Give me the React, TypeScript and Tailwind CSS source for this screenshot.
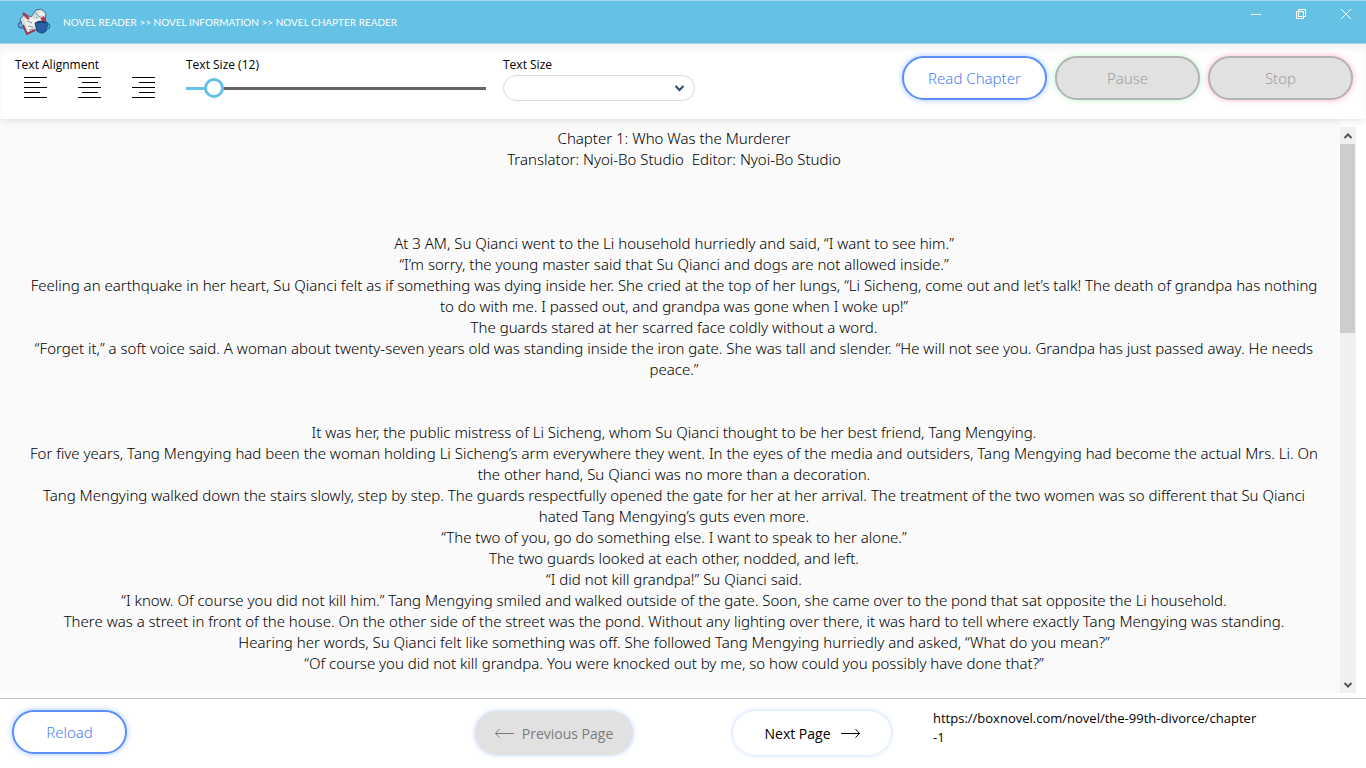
import { useState } from "react";

const story: string[] = [
  "Chapter 1: Who Was the Murderer",
  "Translator: Nyoi-Bo Studio\u00a0 Editor: Nyoi-Bo Studio",
  "",
  "",
  "",
  "At 3 AM, Su Qianci went to the Li household hurriedly and said, “I want to see him.”",
  "“I’m sorry, the young master said that Su Qianci and dogs are not allowed inside.”",
  "Feeling an earthquake in her heart, Su Qianci felt as if something was dying inside her. She cried at the top of her lungs, “Li Sicheng, come out and let’s talk! The death of grandpa has nothing to do with me. I passed out, and grandpa was gone when I woke up!”",
  "The guards stared at her scarred face coldly without a word.",
  "“Forget it,” a soft voice said. A woman about twenty-seven years old was standing inside the iron gate. She was tall and slender. “He will not see you. Grandpa has just passed away. He needs peace.”",
  "",
  "",
  "It was her, the public mistress of Li Sicheng, whom Su Qianci thought to be her best friend, Tang Mengying.",
  "For five years, Tang Mengying had been the woman holding Li Sicheng’s arm everywhere they went. In the eyes of the media and outsiders, Tang Mengying had become the actual Mrs. Li. On the other hand, Su Qianci was no more than a decoration.",
  "Tang Mengying walked down the stairs slowly, step by step. The guards respectfully opened the gate for her at her arrival. The treatment of the two women was so different that Su Qianci hated Tang Mengying’s guts even more.",
  "“The two of you, go do something else. I want to speak to her alone.”",
  "The two guards looked at each other, nodded, and left.",
  "“I did not kill grandpa!” Su Qianci said.",
  "“I know. Of course you did not kill him.” Tang Mengying smiled and walked outside of the gate. Soon, she came over to the pond that sat opposite the Li household.",
  "There was a street in front of the house. On the other side of the street was the pond. Without any lighting over there, it was hard to tell where exactly Tang Mengying was standing.",
  "Hearing her words, Su Qianci felt like something was off. She followed Tang Mengying hurriedly and asked, “What do you mean?”",
  "“Of course you did not kill grandpa. You were knocked out by me, so how could you possibly have done that?”",
];

function Logo() {
  return (
    <svg width="34" height="30" viewBox="0 0 34 30" aria-hidden="true">
      <path d="m3 12 5-5 6 3 5-7 5-1 5 4-1 9-6 6-12 6-5-9z" fill="#d4dcdb" stroke="#4a6a90" strokeWidth="1" />
      <path d="m7 12 6-2 6 2 4-8 5 3-3 9-8 4-6 5z" fill="#eef0ea" />
      <path d="m6 6 6 6" stroke="#a93a50" strokeWidth="2.5" />
      <path d="m25 10 3 5" stroke="#b5394b" strokeWidth="4" />
      <path d="m6 18 4 9 8-4" stroke="#9b3c55" strokeWidth="2" fill="none" />
      <path d="M18 16q6-4 13 0l-2 8q-4 4-9 0z" fill="#2762a5" stroke="#243f78" />
      <path d="M20 16q5-2 9 0" stroke="#17335f" fill="none" />
      <path d="M30 17q4 0 2 4l-3 2M5 15q-5 1-3 5l4 1" fill="none" stroke="#326faf" strokeWidth="1.5" />
      <path d="m10 14 5 2m-4 3 5 1m-4 3 4-1M18 6l4 3m-3 2 5-2" stroke="#8396a8" />
    </svg>
  );
}

function TitleBar() {
  return (
    <header className="flex h-11 items-center border-y border-[#a9dcf0] bg-[#65c2e5] pl-[17px] text-white">
      <Logo />
      <h1 className="ml-3 grow whitespace-nowrap font-['Lato',sans-serif] text-[10px] leading-5">
        NOVEL READER &gt;&gt; NOVEL INFORMATION &gt;&gt; NOVEL CHAPTER READER
      </h1>
      <div className="flex gap-[5px] self-start">
        <button aria-label="Minimize" className="flex h-[26px] w-10 items-center justify-center">
          <svg width="12" height="12" fill="none" stroke="currentColor" shapeRendering="crispEdges"><path d="M1 6.5h10" /></svg>
        </button>
        <button aria-label="Restore" className="flex h-[26px] w-10 items-center justify-center">
          <svg width="12" height="12" fill="none" stroke="currentColor" shapeRendering="crispEdges"><path d="M3.5 1.5h7v7h-7zM1.5 3.5h7v7h-7z" /></svg>
        </button>
        <button aria-label="Close" className="flex h-[26px] w-10 items-center justify-center">
          <svg width="12" height="12" fill="none" stroke="currentColor"><path d="m1 1 10 10M11 1 1 11" /></svg>
        </button>
      </div>
    </header>
  );
}

function AlignButton({ label, d }: { label: string; d: string }) {
  return (
    <button aria-label={label} className="flex h-[23px] w-[54px] items-end pl-[9px]">
      <svg width="23" height="21" viewBox="0 0 23 21" fill="none" stroke="#000" shapeRendering="crispEdges"><path d={d} /></svg>
    </button>
  );
}

function Toolbar() {
  const [size, setSize] = useState(12);
  return (
    <section className="relative z-10 flex h-[75px] shrink-0 items-start bg-white pt-[11px] shadow-[0_1px_8px_rgba(0,0,0,0.12),inset_0_5px_6px_rgba(0,0,0,0.05)]">
      <div className="ml-[15px] w-[171px]">
        <div className="h-5 text-[12px] leading-5">Text Alignment</div>
        <div className="flex">
          <AlignButton label="Align left" d="M0 .5h23M0 5.5h16M0 10.5h23M0 15.5h16M0 20.5h23" />
          <AlignButton label="Align center" d="M0 .5h23M4 5.5h16M0 10.5h23M4 15.5h16M0 20.5h23" />
          <AlignButton label="Align right" d="M0 .5h23M7 5.5h16M0 10.5h23M7 15.5h16M0 20.5h23" />
        </div>
      </div>
      <div className="w-[317px]">
        <label htmlFor="size" className="block h-5 text-[12px] leading-5">Text Size ({size})</label>
        <input
          id="size"
          type="range"
          min="8"
          max="72"
          value={size}
          onChange={(e) => setSize(Number(e.target.value))}
          className="block h-[26px] w-[300px] appearance-none bg-[linear-gradient(to_right,#65c2e5_20px,#666_20px)] bg-[length:100%_3px] bg-center bg-no-repeat [&::-webkit-slider-thumb]:size-5 [&::-webkit-slider-thumb]:appearance-none [&::-webkit-slider-thumb]:rounded-full [&::-webkit-slider-thumb]:border-[3px] [&::-webkit-slider-thumb]:border-[#65c2e5] [&::-webkit-slider-thumb]:bg-white"
        />
      </div>
      <div>
        <label htmlFor="preset" className="block h-5 text-[12px] leading-5">Text Size</label>
        <div className="grid">
          <select id="preset" className="col-start-1 row-start-1 h-[26px] w-48 appearance-none rounded-full border border-[#d9d9e0] bg-white px-3 text-[12px]">
            <option></option>
            <option>12</option>
            <option>14</option>
          </select>
          <svg className="pointer-events-none col-start-1 row-start-1 mr-2.5 self-center justify-self-end" width="11" height="8" fill="none" stroke="#344767" strokeWidth="2"><path d="m1.500 2 4 4 4-4" /></svg>
        </div>
      </div>
      <div className="mt-px mr-[13px] ml-auto flex gap-2 font-['Noto_Sans',sans-serif] text-[15px] font-light">
        <button className="h-11 w-[145px] rounded-full border-2 border-[#5a8dff] bg-white text-[#4a80f5] shadow-[0_0_6px_#a9c8ff]">Read Chapter</button>
        <button disabled className="h-11 w-[145px] rounded-full border-2 border-[#b3b3b3] bg-[#e1e1e1] text-[#a0a0a0] shadow-[0_0_6px_#b9f5cb]">Pause</button>
        <button disabled className="h-11 w-[145px] rounded-full border-2 border-[#b3b3b3] bg-[#e1e1e1] text-[#a0a0a0] shadow-[0_0_6px_#ffb3c4]">Stop</button>
      </div>
    </section>
  );
}

function ScrollBar() {
  return (
    <div className="flex w-[26px] shrink-0 bg-white pt-2 pr-2.5" aria-hidden="true">
      <div className="flex w-4 flex-col bg-[#f0f0f0]">
        <svg className="shrink-0" width="16" height="17" fill="none" stroke="#555" strokeWidth="2"><path d="m4.500 11 3.500-3.500 3.500 3.500" /></svg>
        <div className="h-[189px] w-[15px] bg-[#cdcdcd]" />
        <svg className="mt-auto shrink-0" width="16" height="17" fill="none" stroke="#555" strokeWidth="2"><path d="m4.500 7 3.500 3.500 3.500-3.500" /></svg>
      </div>
    </div>
  );
}

function Reader() {
  return (
    <main className="flex min-h-0 grow bg-[#fafafa]">
      <article className="min-w-0 grow overflow-hidden pt-[9px] pr-4 pl-6 text-center font-['Noto_Sans',sans-serif] text-[15px] leading-[21px] font-light">
        {story.map((line, i) => (
          <p key={i} className="min-h-[21px]">{line}</p>
        ))}
      </article>
      <ScrollBar />
    </main>
  );
}

function Footer() {
  return (
    <footer className="mt-[5px] flex h-[70px] shrink-0 items-start border-t border-[#bfc3ca] bg-white pt-[11px]">
      <button className="ml-3 h-11 w-[115px] rounded-full border-2 border-[#5a8dff] bg-white font-['Noto_Sans',sans-serif] text-[15px] font-light text-[#4a80f5] shadow-[0_0_6px_#a9c8ff]">Reload</button>
      <button disabled className="mt-px ml-[348px] flex h-11 w-[158px] items-center justify-center gap-2 rounded-full bg-[#e1e1e1] text-[14px] text-[#7b7b7b] shadow-[0_0_5px_#bcd5ff]">
        <svg width="19" height="9" fill="none" stroke="currentColor"><path d="M0 4.500h19M4.500 0 .5 4.500l4 4" /></svg>
        Previous Page
      </button>
      <button className="mt-px ml-[100px] flex h-11 w-[158px] items-center justify-center gap-2.5 rounded-full bg-white text-[14px] text-black shadow-[0_0_5px_#bcd5ff]">
        Next Page
        <svg width="19" height="9" fill="none" stroke="currentColor"><path d="M0 4.500h19M14.500 0l4 4.500-4 4" /></svg>
      </button>
      <p className="-mt-px ml-[42px] w-[324px] text-[13px] leading-[19px] break-all">https://boxnovel.com/novel/the-99th-divorce/chapter-1</p>
    </footer>
  );
}

export default function App() {
  return (
    <div className="flex h-screen flex-col overflow-hidden bg-white font-['Open_Sans','Noto_Sans',sans-serif] text-black">
      <TitleBar />
      <Toolbar />
      <Reader />
      <Footer />
    </div>
  );
}
